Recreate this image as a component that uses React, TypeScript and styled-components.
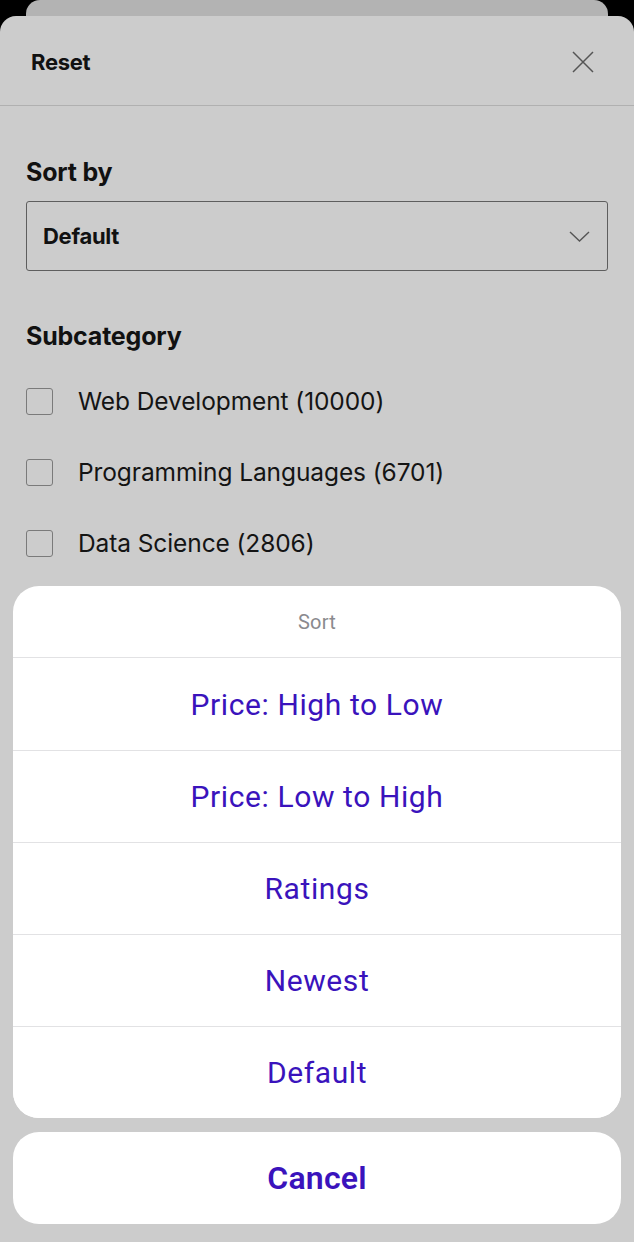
import { createGlobalStyle } from "styled-components";
import styled from "styled-components";

const GlobalStyle = createGlobalStyle`
  html, body {
    margin: 0;
    padding: 0;
    background: #000;
  }
  body {
    font-family: Inter, "Liberation Sans", Arial, sans-serif;
    -webkit-font-smoothing: antialiased;
  }
`;

const Screen = styled.div`
  position: relative;
  width: 634px;
  height: 1242px;
  overflow: hidden;
  background: #000;
  display: flex;
  flex-direction: column;
`;

const PeekCard = styled.div`
  height: 16px;
  margin: 0 26px;
  background: #b3b3b3;
  border-radius: 14px 14px 0 0;
  flex-shrink: 0;
`;

const FilterSheet = styled.div`
  flex: 1;
  background: #cccccc;
  border-radius: 16px 16px 0 0;
  display: flex;
  flex-direction: column;
`;

const SheetHeader = styled.div`
  height: 90px;
  box-sizing: border-box;
  padding: 2px 40px 0 31px;
  display: flex;
  align-items: center;
  justify-content: space-between;
  border-bottom: 1px solid #b0b0b0;
`;

const ResetButton = styled.button`
  background: none;
  border: none;
  padding: 0;
  font-family: inherit;
  font-size: 22px;
  font-weight: 700;
  color: #111;
  letter-spacing: -0.3px;
`;

const CloseButton = styled.button`
  background: none;
  border: none;
  padding: 0;
  width: 22px;
  height: 22px;
  display: flex;
  align-items: center;
  justify-content: center;
`;

const Body = styled.div`
  padding: 51px 26px 0 26px;
  display: flex;
  flex-direction: column;
`;

const SectionTitle = styled.h2<{ $gap?: number }>`
  margin: 0 0 ${({ $gap }) => $gap ?? 14}px 0;
  font-size: 25px;
  font-weight: 700;
  color: #111;
  letter-spacing: -0.2px;
  line-height: 30px;
`;

const Select = styled.div`
  height: 70px;
  box-sizing: border-box;
  border: 1px solid #5e5e5e;
  border-radius: 3px;
  padding: 0 17px 0 16px;
  display: flex;
  align-items: center;
  justify-content: space-between;
  margin-bottom: 50px;
`;

const SelectValue = styled.span`
  font-size: 22px;
  font-weight: 700;
  color: #111;
  letter-spacing: -0.3px;
`;

const CheckList = styled.div`
  display: flex;
  flex-direction: column;
  gap: 35px;
  margin-top: 12px;
`;

const CheckRow = styled.label`
  display: flex;
  align-items: center;
  gap: 25px;
  height: 36px;
`;

const Box = styled.span`
  width: 27px;
  height: 27px;
  box-sizing: border-box;
  border: 1.5px solid #7a7a7a;
  border-radius: 3px;
  flex-shrink: 0;
`;

const CheckLabel = styled.span`
  font-size: 24.5px;
  color: #141414;
  letter-spacing: -0.1px;
`;

const ActionSheet = styled.div`
  position: absolute;
  left: 13px;
  right: 13px;
  bottom: 18px;
  display: flex;
  flex-direction: column;
  gap: 14px;
  font-family: Roboto, "Liberation Sans", Arial, sans-serif;
`;

const ActionGroup = styled.div`
  background: #fff;
  border-radius: 26px;
  overflow: hidden;
  display: flex;
  flex-direction: column;
`;

const ActionTitle = styled.div`
  height: 71px;
  display: flex;
  align-items: center;
  justify-content: center;
  font-size: 20px;
  color: #8a8a8e;
  letter-spacing: 0.2px;
  border-bottom: 1px solid #e2e2e4;
`;

const ActionButton = styled.button<{ $bold?: boolean }>`
  height: 92px;
  border: none;
  background: #fff;
  font-family: inherit;
  font-size: ${({ $bold }) => ($bold ? 32 : 30)}px;
  font-weight: ${({ $bold }) => ($bold ? 600 : 400)};
  letter-spacing: ${({ $bold }) => ($bold ? 0.2 : 0.6)}px;
  color: #3a13bc;
  & + & {
    border-top: 1px solid #e2e2e4;
  }
`;

const subcategories = [
  { name: "Web Development", count: 10000 },
  { name: "Programming Languages", count: 6701 },
  { name: "Data Science", count: 2806 },
];

const sortOptions = [
  "Price: High to Low",
  "Price: Low to High",
  "Ratings",
  "Newest",
  "Default",
];

export default function App() {
  return (
    <>
      <GlobalStyle />
      <Screen>
        <PeekCard />
        <FilterSheet>
          <SheetHeader>
            <ResetButton>Reset</ResetButton>
            <CloseButton aria-label="Close">
              <svg width="22" height="22" viewBox="0 0 22 22">
                <path d="M1 1 L21 21 M21 1 L1 21" stroke="#555" strokeWidth="1.5" />
              </svg>
            </CloseButton>
          </SheetHeader>
          <Body>
            <SectionTitle>Sort by</SectionTitle>
            <Select>
              <SelectValue>Default</SelectValue>
              <svg width="21" height="11" viewBox="0 0 21 11">
                <path d="M1 1 L10.5 10 L20 1" fill="none" stroke="#555" strokeWidth="1.4" />
              </svg>
            </Select>
            <SectionTitle $gap={20}>Subcategory</SectionTitle>
            <CheckList>
              {subcategories.map((s) => (
                <CheckRow key={s.name}>
                  <Box />
                  <CheckLabel>
                    {s.name} ({s.count})
                  </CheckLabel>
                </CheckRow>
              ))}
            </CheckList>
          </Body>
        </FilterSheet>
        <ActionSheet>
          <ActionGroup>
            <ActionTitle>Sort</ActionTitle>
            {sortOptions.map((o) => (
              <ActionButton key={o}>{o}</ActionButton>
            ))}
          </ActionGroup>
          <ActionGroup>
            <ActionButton $bold>Cancel</ActionButton>
          </ActionGroup>
        </ActionSheet>
      </Screen>
    </>
  );
}
